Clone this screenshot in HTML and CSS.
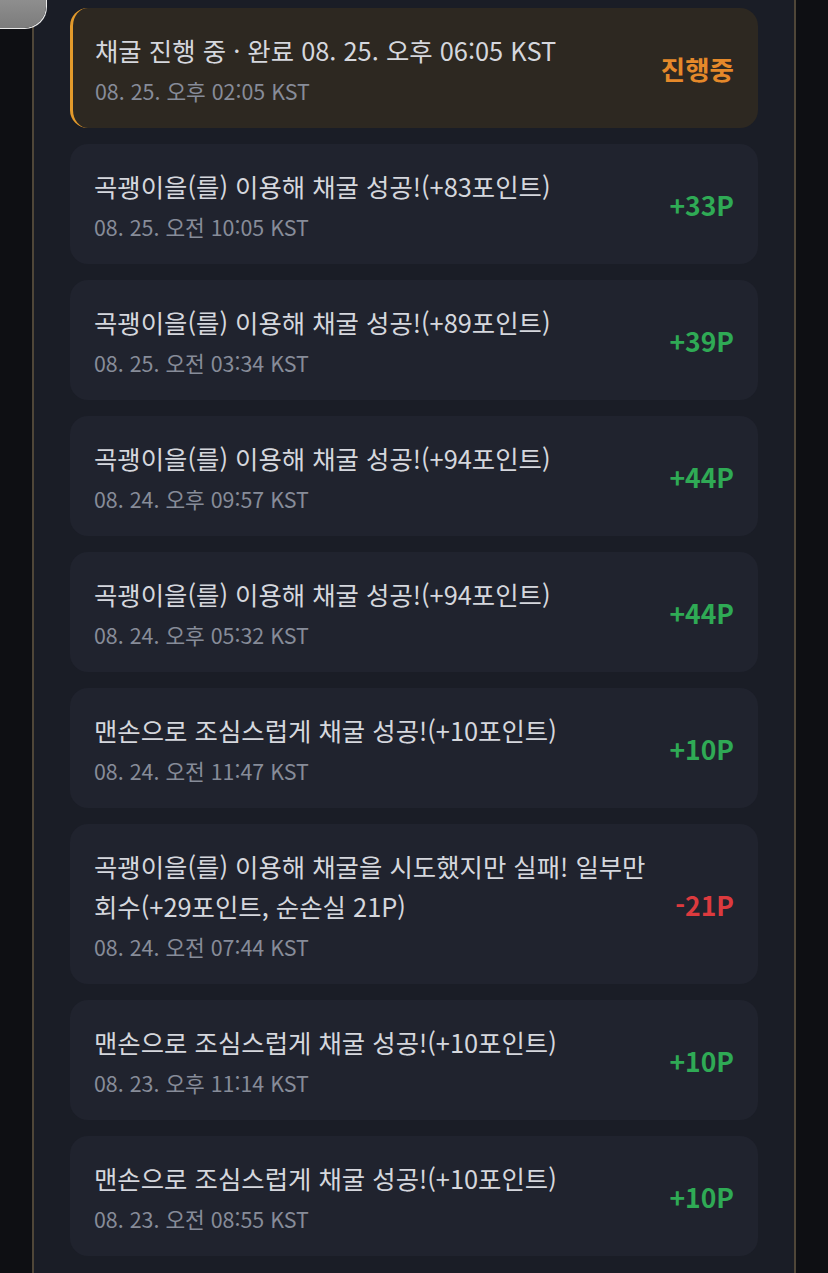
FILE: index.html
```html
<!DOCTYPE html>
<html lang="ko">
<head>
<meta charset="utf-8">
<link rel="stylesheet" href="styles.css">
</head>
<body>
<div class="blob"></div>
<main class="panel">
  <div class="card card-active">
    <div class="info">
      <div class="title">채굴 진행 중 · 완료 08. 25. 오후 06:05 KST</div>
      <div class="date">08. 25. 오후 02:05 KST</div>
    </div>
    <div class="amount pending">진행중</div>
  </div>
  <div class="card">
    <div class="info">
      <div class="title">곡괭이을(를) 이용해 채굴 성공!(+83포인트)</div>
      <div class="date">08. 25. 오전 10:05 KST</div>
    </div>
    <div class="amount plus">+33P</div>
  </div>
  <div class="card">
    <div class="info">
      <div class="title">곡괭이을(를) 이용해 채굴 성공!(+89포인트)</div>
      <div class="date">08. 25. 오전 03:34 KST</div>
    </div>
    <div class="amount plus">+39P</div>
  </div>
  <div class="card">
    <div class="info">
      <div class="title">곡괭이을(를) 이용해 채굴 성공!(+94포인트)</div>
      <div class="date">08. 24. 오후 09:57 KST</div>
    </div>
    <div class="amount plus">+44P</div>
  </div>
  <div class="card">
    <div class="info">
      <div class="title">곡괭이을(를) 이용해 채굴 성공!(+94포인트)</div>
      <div class="date">08. 24. 오후 05:32 KST</div>
    </div>
    <div class="amount plus">+44P</div>
  </div>
  <div class="card">
    <div class="info">
      <div class="title">맨손으로 조심스럽게 채굴 성공!(+10포인트)</div>
      <div class="date">08. 24. 오전 11:47 KST</div>
    </div>
    <div class="amount plus">+10P</div>
  </div>
  <div class="card">
    <div class="info">
      <div class="title">곡괭이을(를) 이용해 채굴을 시도했지만 실패! 일부만<br>회수(+29포인트, 순손실 21P)</div>
      <div class="date">08. 24. 오전 07:44 KST</div>
    </div>
    <div class="amount minus">-21P</div>
  </div>
  <div class="card">
    <div class="info">
      <div class="title">맨손으로 조심스럽게 채굴 성공!(+10포인트)</div>
      <div class="date">08. 23. 오후 11:14 KST</div>
    </div>
    <div class="amount plus">+10P</div>
  </div>
  <div class="card">
    <div class="info">
      <div class="title">맨손으로 조심스럽게 채굴 성공!(+10포인트)</div>
      <div class="date">08. 23. 오전 08:55 KST</div>
    </div>
    <div class="amount plus">+10P</div>
  </div>
</main>
</body>
</html>
```
FILE: styles.css
```css
html, body {
  margin: 0;
  padding: 0;
}
body {
  background: #0e0f13;
  font-family: "Noto Sans CJK KR", "Noto Sans", sans-serif;
  min-height: 1273px;
  position: relative;
  overflow: hidden;
}
.blob {
  position: absolute;
  left: -44px;
  top: -34px;
  width: 90px;
  height: 62px;
  border-radius: 22px;
  background: linear-gradient(180deg, #a3a3a3 0%, #8c8c8c 60%, #7c7c7c 100%);
  box-shadow: 1px 1px 0 #e8e8e8;
  z-index: 2;
}
.panel {
  margin-left: 32px;
  width: 764px;
  min-height: 1273px;
  box-sizing: border-box;
  background: #1a1d26;
  border-left: 2px solid #4f4638;
  border-right: 2px solid #4f4638;
  padding: 8px 36px 18px 36px;
  display: flex;
  flex-direction: column;
  gap: 16px;
}
.card {
  background: #20232e;
  border-radius: 18px;
  padding: 22px 24px 18px 24px;
  display: flex;
  align-items: center;
  justify-content: space-between;
}
.card-active {
  background: #2d2821;
  border-left: 3px solid #e39a2b;
  padding-left: 22px;
}
.title {
  font-size: 25.4px;
  line-height: 40px;
  color: #d5d7dd;
}
.date {
  font-size: 21.4px;
  line-height: 38px;
  margin-top: 2px;
  color: #878c99;
}
.amount {
  font-size: 26.5px;
  font-weight: 700;
  white-space: nowrap;
  margin-bottom: 4px;
}
.plus { color: #2faa55; }
.minus { color: #dc3a3e; }
.pending { color: #e5892a; }
```
